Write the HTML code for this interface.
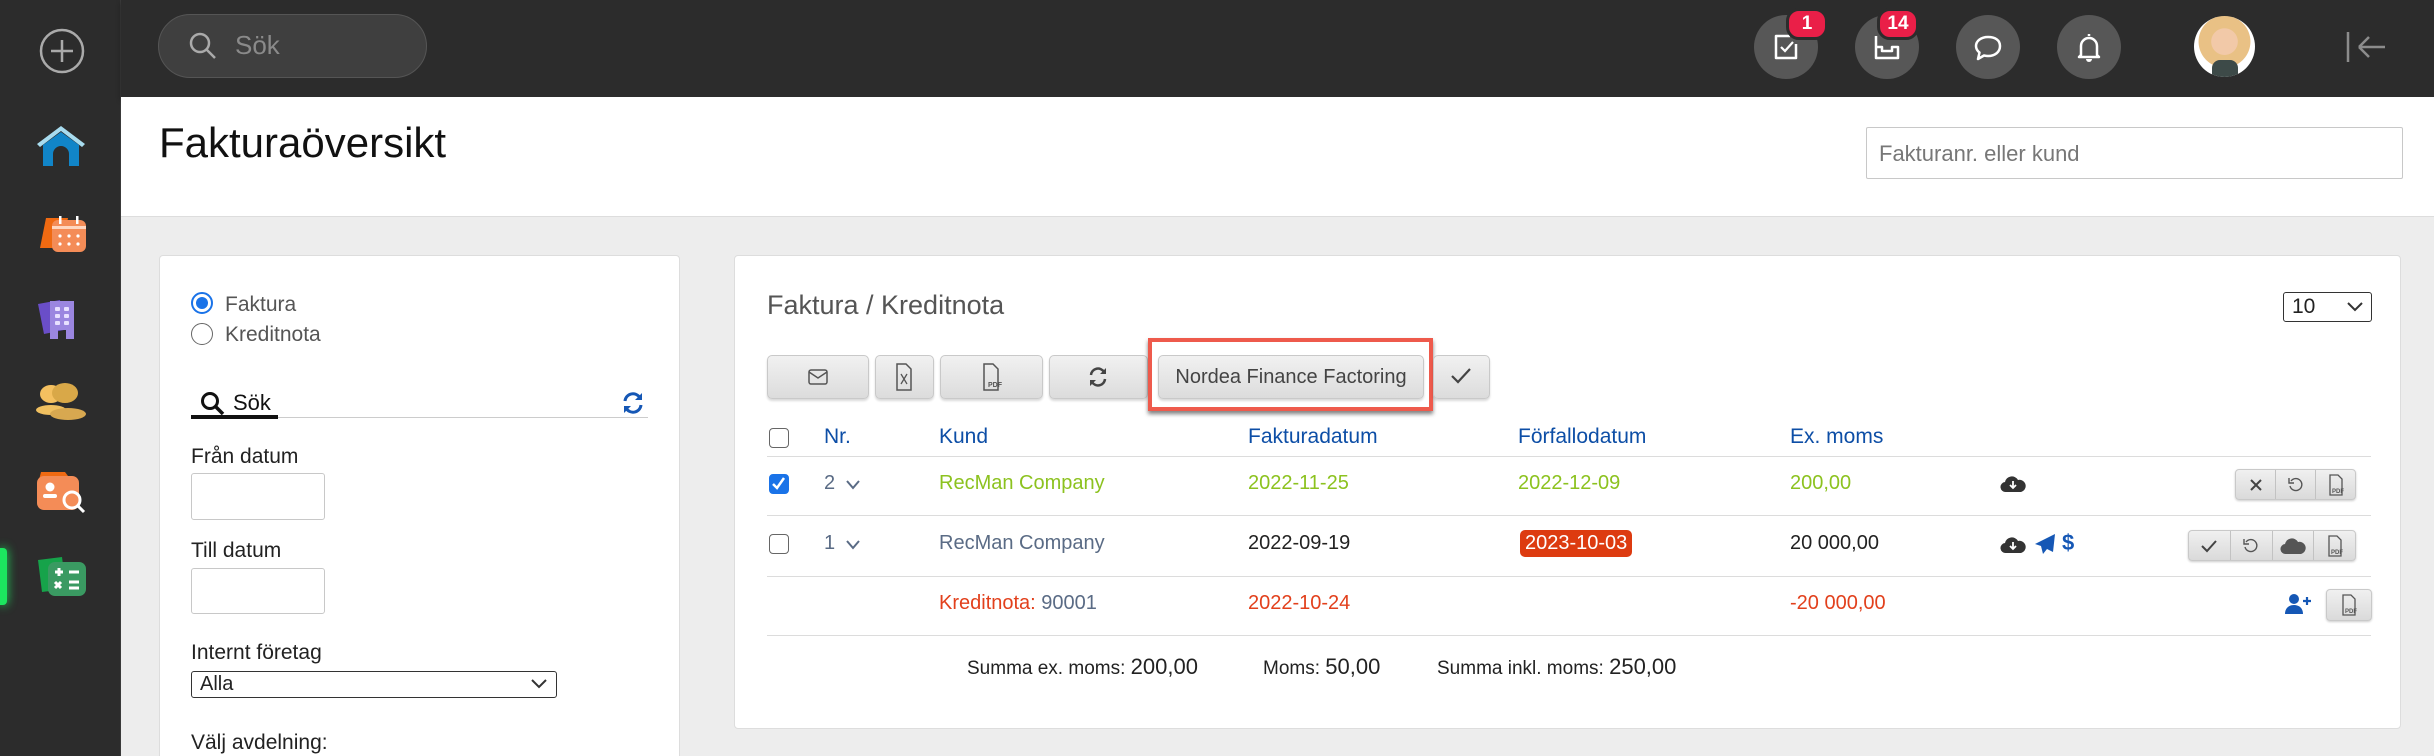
<!DOCTYPE html>
<html><head><meta charset="utf-8"><style>
*{box-sizing:border-box;margin:0;padding:0}
html{width:2434px;height:756px;overflow:hidden}
body{width:2434px;height:756px;overflow:hidden;background:#ededed;font-family:"Liberation Sans",sans-serif;position:relative;color:#222}
.abs{position:absolute}
#side{left:0;top:0;width:121px;height:756px;background:#2c2c2c;border-right:1px solid #3a3a3a}
#top{left:121px;top:0;width:2313px;height:97px;background:#2c2c2c;box-shadow:0 3px 5px rgba(0,0,0,.35)}
.circ{position:absolute;width:64px;height:64px;border-radius:50%;background:#575757;top:15px}
.badge{position:absolute;height:26px;min-width:26px;border-radius:13px;background:#ea1f48;color:#fff;font-weight:bold;font-size:19px;text-align:center;line-height:26px;padding:0 5px;border:3px solid #2c2c2c;box-sizing:content-box;top:8px}
#hdr{left:121px;top:97px;width:2313px;height:120px;background:#fff;border-bottom:1px solid #ddd}
.panel{background:#fff;border:1px solid #ddd;border-radius:4px}
.lbl{font-size:21px;color:#222}
.inp{border:1px solid #c8c8c8;border-radius:3px;background:#fff}
.btn{position:absolute;top:355px;height:44px;border:1px solid #c9c9c9;border-radius:5px;background:linear-gradient(#f1f1f1,#dcdcdc);box-shadow:0 2px 2px rgba(0,0,0,.15)}
.th{position:absolute;top:425px;font-size:21px;color:#0d4ea6}
.td{position:absolute;font-size:20px}
.hl{position:absolute;left:767px;width:1604px;height:1px;background:#dcdcdc}
.cb{position:absolute;width:20px;height:20px;border:1.5px solid #666;border-radius:4px;background:#fff}
.ab{position:absolute;height:31px;border:1px solid #c9c9c9;border-radius:4px;background:linear-gradient(#f0f0f0,#dadada);box-shadow:0 1px 2px rgba(0,0,0,.2);display:flex}
.ab div{flex:1;border-right:1px solid #c2c2c2;display:flex;align-items:center;justify-content:center}
.ab div:last-child{border-right:none}
</style></head><body>
<div id="side" class="abs">
 <svg class="abs" style="left:39px;top:28px" width="46" height="46" viewBox="0 0 46 46"><circle cx="23" cy="23" r="21" fill="none" stroke="#aaa" stroke-width="2.5"/><path d="M23 12v22M12 23h22" stroke="#aaa" stroke-width="2.5"/></svg>
 <svg class="abs" style="left:34px;top:124px" width="54" height="44" viewBox="0 0 54 44"><path d="M27 2L3 20l3 3L27 7l21 16 3-3z" fill="#a8dcef"/><path d="M9 21L27 8l18 13v21H35V30a8 8 0 0 0-16 0v12H9z" fill="#1185c8"/></svg>
 <svg class="abs" style="left:38px;top:212px" width="50" height="42" viewBox="0 0 50 42"><path d="M8 6h22l-6 30H2z" fill="#f06a12"/><rect x="14" y="8" width="34" height="32" rx="6" fill="#f48c57"/><rect x="14" y="14" width="34" height="3" fill="#ffd6c0"/><g fill="#fff"><circle cx="22" cy="24" r="1.6"/><circle cx="31" cy="24" r="1.6"/><circle cx="40" cy="24" r="1.6"/><circle cx="22" cy="32" r="1.6"/><circle cx="31" cy="32" r="1.6"/><circle cx="40" cy="32" r="1.6"/></g><rect x="21" y="4" width="2.5" height="8" fill="#fff"/><rect x="38" y="4" width="2.5" height="8" fill="#fff"/></svg>
 <svg class="abs" style="left:36px;top:298px" width="44" height="42" viewBox="0 0 44 42"><path d="M2 6l22-4 4 30L8 36z" fill="#6a4ec8"/><path d="M14 3h24v38h-8V32h-8v9h-8z" fill="#9b86e0"/><g fill="#e8e0ff"><rect x="19" y="9" width="5" height="4" rx="1"/><rect x="28" y="9" width="5" height="4" rx="1"/><rect x="19" y="16" width="5" height="4" rx="1"/><rect x="28" y="16" width="5" height="4" rx="1"/><rect x="19" y="23" width="5" height="4" rx="1"/><rect x="28" y="23" width="5" height="4" rx="1"/></g></svg>
 <svg class="abs" style="left:35px;top:382px" width="52" height="42" viewBox="0 0 52 42"><ellipse cx="16" cy="12" rx="11" ry="9" fill="#f4c060"/><ellipse cx="30" cy="11" rx="13" ry="10" fill="#d9a848"/><ellipse cx="16" cy="28" rx="15" ry="5" fill="#f0c060"/><ellipse cx="33" cy="32" rx="18" ry="6" fill="#d8a850"/></svg>
 <svg class="abs" style="left:35px;top:470px" width="52" height="44" viewBox="0 0 52 44"><path d="M6 2h24l6 8H4z" fill="#f06a12"/><rect x="2" y="6" width="42" height="34" rx="7" fill="#f48c57"/><circle cx="15" cy="17" r="4.5" fill="#fff"/><rect x="8" y="24" width="14" height="4" rx="2" fill="#fff"/><circle cx="37" cy="30" r="8" fill="none" stroke="#fff" stroke-width="3"/><path d="M43 36l6 6" stroke="#fff" stroke-width="3"/></svg>
 <div class="abs" style="left:0;top:548px;width:7px;height:57px;background:#1ce65f;border-radius:0 4px 4px 0;box-shadow:0 0 10px #1ce65f"></div>
 <svg class="abs" style="left:36px;top:554px" width="52" height="44" viewBox="0 0 52 44"><path d="M2 6l24-3 4 32L6 38z" fill="#16a34a"/><rect x="12" y="8" width="38" height="34" rx="7" fill="#3a9a62"/><g stroke="#fff" stroke-width="3"><path d="M19 18h8M23 14v8M33 18h10M19 28l6 6M25 28l-6 6M33 28h10M33 34h10"/></g></svg>
</div>
<div id="top" class="abs">
 <div class="abs" style="left:37px;top:14px;width:269px;height:64px;border-radius:32px;background:#3f3f3f;border:1px solid #555"></div>
 <svg class="abs" style="left:66px;top:30px" width="32" height="32" viewBox="0 0 32 32"><circle cx="13" cy="13" r="9" fill="none" stroke="#aaa" stroke-width="2.5"/><path d="M20 20l8 8" stroke="#aaa" stroke-width="2.5"/></svg>
 <div class="abs" style="left:114px;top:30px;font-size:26px;color:#8a8a8a">Sök</div>
</div>
<div class="circ" style="left:1754px"></div>
<svg class="abs" style="left:1772px;top:33px" width="28" height="28" viewBox="0 0 28 28"><path d="M18 3H4v22h20V11" fill="none" stroke="#fff" stroke-width="2.5" stroke-linejoin="round"/><path d="M9 14l4 4 8-9" fill="none" stroke="#fff" stroke-width="2.2"/></svg>
<div class="badge" style="left:1786px">1</div>
<div class="circ" style="left:1855px"></div>
<svg class="abs" style="left:1872px;top:33px" width="30" height="28" viewBox="0 0 30 28"><path d="M4 3v22h22V14H20v4H10v-4H4" fill="none" stroke="#fff" stroke-width="2.5" stroke-linejoin="round"/></svg>
<div class="badge" style="left:1877px">14</div>
<div class="circ" style="left:1956px"></div>
<svg class="abs" style="left:1973px;top:33px" width="30" height="30" viewBox="0 0 30 30"><path d="M15 4C8 4 3 8 3 13c0 3 1.5 5 3.5 6.5L5 26l6-3.5c1.3.3 2.6.5 4 .5 7 0 12-4 12-10S22 4 15 4z" fill="none" stroke="#fff" stroke-width="2.5" stroke-linejoin="round"/></svg>
<div class="circ" style="left:2057px"></div>
<svg class="abs" style="left:2075px;top:31px" width="28" height="32" viewBox="0 0 28 32"><path d="M14 3v2M6 24V15a8 8 0 0 1 16 0v9l2 2H4z" fill="none" stroke="#fff" stroke-width="2.5" stroke-linejoin="round"/><path d="M11 28a3 3 0 0 0 6 0z" fill="#fff"/></svg>
<div class="abs" style="left:2194px;top:16px;width:61px;height:61px;border-radius:50%;background:radial-gradient(circle at 50% 42%,#f2c9a8 0 28%,#e9c185 29% 55%,#fff 56%);overflow:hidden"><div style="position:absolute;left:18px;top:44px;width:26px;height:20px;background:#3d4a48;border-radius:8px 8px 0 0"></div></div>
<svg class="abs" style="left:2345px;top:30px" width="42" height="34" viewBox="0 0 42 34"><path d="M3 2v30M14 17h26M14 17l10-10M14 17l10 10" fill="none" stroke="#8c8c8c" stroke-width="2.5"/></svg>

<div id="hdr" class="abs"></div>
<div class="abs" style="left:159px;top:119px;font-size:42px;color:#111">Fakturaöversikt</div>
<div class="abs inp" style="left:1866px;top:127px;width:537px;height:52px;border-radius:2px"></div>
<div class="abs" style="left:1879px;top:141px;font-size:22px;color:#777">Fakturanr. eller kund</div>

<div class="abs panel" style="left:159px;top:255px;width:521px;height:520px"></div>
<div class="abs" style="left:191px;top:292px;width:22px;height:22px;border-radius:50%;border:2px solid #1a73e8;background:#fff"><div style="margin:3px;width:12px;height:12px;border-radius:50%;background:#1a73e8"></div></div>
<div class="abs" style="left:191px;top:323px;width:22px;height:22px;border-radius:50%;border:1.5px solid #666;background:#fff"></div>
<div class="abs lbl" style="left:225px;top:293px;color:#555">Faktura</div>
<div class="abs lbl" style="left:225px;top:323px;color:#555">Kreditnota</div>
<svg class="abs" style="left:200px;top:391px" width="26" height="26" viewBox="0 0 26 26"><circle cx="10" cy="10" r="7.5" fill="none" stroke="#111" stroke-width="3"/><path d="M16 16l7 7" stroke="#111" stroke-width="3.5"/></svg>
<div class="abs" style="left:233px;top:390px;font-size:22px;color:#111">Sök</div>
<div class="abs" style="left:191px;top:417px;width:457px;height:1px;background:#ccc"></div>
<div class="abs" style="left:191px;top:415px;width:87px;height:4px;background:#111"></div>
<svg class="abs" style="left:621px;top:391px" width="24" height="24" viewBox="0 0 24 24"><path d="M4 10a8 8 0 0 1 15-3M20 14a8 8 0 0 1-15 3" fill="none" stroke="#1557b5" stroke-width="3"/><path d="M21 2v7h-7zM3 22v-7h7z" fill="#1557b5"/></svg>
<div class="abs lbl" style="left:191px;top:445px">Från datum</div>
<div class="abs inp" style="left:191px;top:473px;width:134px;height:47px"></div>
<div class="abs lbl" style="left:191px;top:539px">Till datum</div>
<div class="abs inp" style="left:191px;top:568px;width:134px;height:46px"></div>
<div class="abs lbl" style="left:191px;top:641px">Internt företag</div>
<div class="abs" style="left:191px;top:671px;width:366px;height:27px;border:1px solid #333;border-radius:3px;background:#fff;font-size:20px;padding:1px 8px">Alla</div>
<svg class="abs" style="left:530px;top:678px" width="18" height="12" viewBox="0 0 18 12"><path d="M2 2l7 7 7-7" fill="none" stroke="#333" stroke-width="2"/></svg>
<div class="abs lbl" style="left:191px;top:731px">Välj avdelning:</div>

<div class="abs panel" style="left:734px;top:255px;width:1667px;height:474px"></div>
<div class="abs" style="left:767px;top:290px;font-size:27px;color:#555">Faktura / Kreditnota</div>
<div class="abs" style="left:2283px;top:292px;width:89px;height:30px;border:1px solid #333;border-radius:3px;background:#fff;font-size:21px;padding:2px 8px">10</div>
<svg class="abs" style="left:2346px;top:301px" width="18" height="12" viewBox="0 0 18 12"><path d="M2 2l7 7 7-7" fill="none" stroke="#333" stroke-width="2"/></svg>

<div class="btn" style="left:767px;width:102px"></div>
<svg class="abs" style="left:807px;top:367px" width="22" height="20" viewBox="0 0 22 20"><rect x="2" y="3" width="18" height="14" rx="2" fill="none" stroke="#555" stroke-width="1.5"/><path d="M2 5l9 6 9-6" fill="none" stroke="#555" stroke-width="1.5"/></svg>
<div class="btn" style="left:875px;width:59px"></div>
<svg class="abs" style="left:894px;top:362px" width="20" height="30" viewBox="0 0 20 30"><path d="M3 2h9l5 5v21H3z" fill="none" stroke="#555" stroke-width="1.5"/><path d="M7 12l6 10M13 12l-6 10" stroke="#555" stroke-width="1.3"/></svg>
<div class="btn" style="left:940px;width:103px"></div>
<svg class="abs" style="left:981px;top:362px" width="22" height="30" viewBox="0 0 22 30"><path d="M3 2h9l5 5v21H3z" fill="none" stroke="#555" stroke-width="1.5"/><text x="7" y="25" font-size="7" font-family="Liberation Sans" font-weight="bold" fill="#555">PDF</text></svg>
<div class="btn" style="left:1049px;width:99px"></div>
<svg class="abs" style="left:1087px;top:365px" width="22" height="24" viewBox="0 0 22 24"><path d="M4 10a7 7 0 0 1 13-3M18 14a7 7 0 0 1-13 3" fill="none" stroke="#444" stroke-width="2.5"/><path d="M19 3v6h-6zM3 21v-6h6z" fill="#444"/></svg>
<div class="abs" style="left:1148px;top:338px;width:285px;height:73px;border:4px solid #ee5a4c;box-shadow:0 3px 4px rgba(0,0,0,.5)"></div>
<div class="btn" style="left:1158px;width:266px;font-size:20px;color:#444;text-align:center;line-height:42px">Nordea Finance Factoring</div>
<div class="btn" style="left:1433px;width:57px"></div>
<svg class="abs" style="left:1450px;top:366px" width="22" height="20" viewBox="0 0 22 20"><path d="M2 10l6 6L20 3" fill="none" stroke="#444" stroke-width="2.2"/></svg>

<div class="cb" style="left:769px;top:428px"></div>
<div class="th" style="left:824px">Nr.</div>
<div class="th" style="left:939px">Kund</div>
<div class="th" style="left:1248px">Fakturadatum</div>
<div class="th" style="left:1518px">Förfallodatum</div>
<div class="th" style="left:1790px">Ex. moms</div>
<div class="hl" style="top:456px"></div>

<div class="cb" style="left:769px;top:474px;background:#1a73e8;border-color:#1a73e8"><svg width="17" height="17" viewBox="0 0 17 17" style="display:block"><path d="M3 9l4 4 7-10" fill="none" stroke="#fff" stroke-width="2.5"/></svg></div>
<div class="td" style="left:824px;top:472px;color:#5a6b85">2</div>
<svg class="abs" style="left:845px;top:479px" width="16" height="12" viewBox="0 0 16 12"><path d="M2 2l6 7 6-7" fill="none" stroke="#5a6b85" stroke-width="2"/></svg>
<div class="td" style="left:939px;top:472px;color:#8cc21f">RecMan Company</div>
<div class="td" style="left:1248px;top:472px;color:#8cc21f">2022-11-25</div>
<div class="td" style="left:1518px;top:472px;color:#8cc21f">2022-12-09</div>
<div class="td" style="left:1790px;top:472px;color:#8cc21f">200,00</div>
<svg class="abs" style="left:2000px;top:474px" width="26" height="20" viewBox="0 0 26 20"><path d="M6 18a5 5 0 0 1-1-10 7 7 0 0 1 13-2 5 5 0 0 1 3 12z" fill="#333"/><path d="M13 7v7M10 11l3 3 3-3" fill="none" stroke="#fff" stroke-width="1.8"/></svg>
<div class="ab" style="left:2235px;top:469px;width:121px"><div><svg width="14" height="14" viewBox="0 0 14 14"><path d="M2 2l10 10M12 2L2 12" stroke="#444" stroke-width="2"/></svg></div><div><svg width="18" height="18" viewBox="0 0 18 18"><path d="M4 5a6 6 0 1 1-1 5" fill="none" stroke="#555" stroke-width="1.4"/><path d="M2 2v5h5" fill="none" stroke="#555" stroke-width="1.4"/></svg></div><div><svg width="18" height="24" viewBox="0 0 18 24"><path d="M3 2h8l4 4v16H3z" fill="none" stroke="#555" stroke-width="1.3"/><text x="5" y="20" font-size="6" font-family="Liberation Sans" font-weight="bold" fill="#555">PDF</text></svg></div></div>
<div class="hl" style="top:515px"></div>

<div class="cb" style="left:769px;top:534px"></div>
<div class="td" style="left:824px;top:532px;color:#5a6b85">1</div>
<svg class="abs" style="left:845px;top:539px" width="16" height="12" viewBox="0 0 16 12"><path d="M2 2l6 7 6-7" fill="none" stroke="#5a6b85" stroke-width="2"/></svg>
<div class="td" style="left:939px;top:532px;color:#5a6b85">RecMan Company</div>
<div class="td" style="left:1248px;top:532px;color:#222">2022-09-19</div>
<div class="td" style="left:1520px;top:530px;color:#fff;background:#dd3b10;border-radius:5px;padding:2px 5px">2023-10-03</div>
<div class="td" style="left:1790px;top:532px;color:#222">20 000,00</div>
<svg class="abs" style="left:2000px;top:535px" width="26" height="20" viewBox="0 0 26 20"><path d="M6 18a5 5 0 0 1-1-10 7 7 0 0 1 13-2 5 5 0 0 1 3 12z" fill="#333"/><path d="M13 7v7M10 11l3 3 3-3" fill="none" stroke="#fff" stroke-width="1.8"/></svg>
<svg class="abs" style="left:2034px;top:533px" width="22" height="22" viewBox="0 0 22 22"><path d="M21 1L1 11l6 2 2 8 4-5 6 3z" fill="#1557b5"/></svg>
<div class="td" style="left:2062px;top:530px;color:#1557b5;font-weight:bold;font-size:22px">$</div>
<div class="ab" style="left:2188px;top:530px;width:168px"><div><svg width="18" height="14" viewBox="0 0 18 14"><path d="M2 7l5 5 9-10" fill="none" stroke="#444" stroke-width="2"/></svg></div><div><svg width="18" height="18" viewBox="0 0 18 18"><path d="M4 5a6 6 0 1 1-1 5" fill="none" stroke="#555" stroke-width="1.4"/><path d="M2 2v5h5" fill="none" stroke="#555" stroke-width="1.4"/></svg></div><div><svg width="26" height="18" viewBox="0 0 26 18"><path d="M6 17a5 5 0 0 1-1-10 7 7 0 0 1 13-2 5 5 0 0 1 3 12z" fill="#555"/></svg></div><div><svg width="18" height="24" viewBox="0 0 18 24"><path d="M3 2h8l4 4v16H3z" fill="none" stroke="#555" stroke-width="1.3"/><text x="5" y="20" font-size="6" font-family="Liberation Sans" font-weight="bold" fill="#555">PDF</text></svg></div></div>
<div class="hl" style="top:576px"></div>

<div class="td" style="left:939px;top:592px;color:#e2401c">Kreditnota: <span style="color:#5a6b85">90001</span></div>
<div class="td" style="left:1248px;top:592px;color:#e2401c">2022-10-24</div>
<div class="td" style="left:1790px;top:592px;color:#e2401c">-20 000,00</div>
<svg class="abs" style="left:2284px;top:593px" width="28" height="22" viewBox="0 0 28 22"><circle cx="10" cy="6" r="5" fill="#1557b5"/><path d="M1 21c0-6 4-9 9-9s9 3 9 9z" fill="#1557b5"/><path d="M23 4v8M19 8h8" stroke="#1557b5" stroke-width="2.2"/></svg>
<div class="ab" style="left:2326px;top:589px;width:46px;height:32px"><div><svg width="18" height="24" viewBox="0 0 18 24"><path d="M3 2h8l4 4v16H3z" fill="none" stroke="#555" stroke-width="1.3"/><text x="5" y="20" font-size="6" font-family="Liberation Sans" font-weight="bold" fill="#555">PDF</text></svg></div></div>
<div class="hl" style="top:635px"></div>

<div class="td" style="left:967px;top:654px;font-size:19px">Summa ex. moms: <span style="font-size:22px">200,00</span></div>
<div class="td" style="left:1263px;top:654px;font-size:19px">Moms: <span style="font-size:22px">50,00</span></div>
<div class="td" style="left:1437px;top:654px;font-size:19px">Summa inkl. moms: <span style="font-size:22px">250,00</span></div>
</body></html>
